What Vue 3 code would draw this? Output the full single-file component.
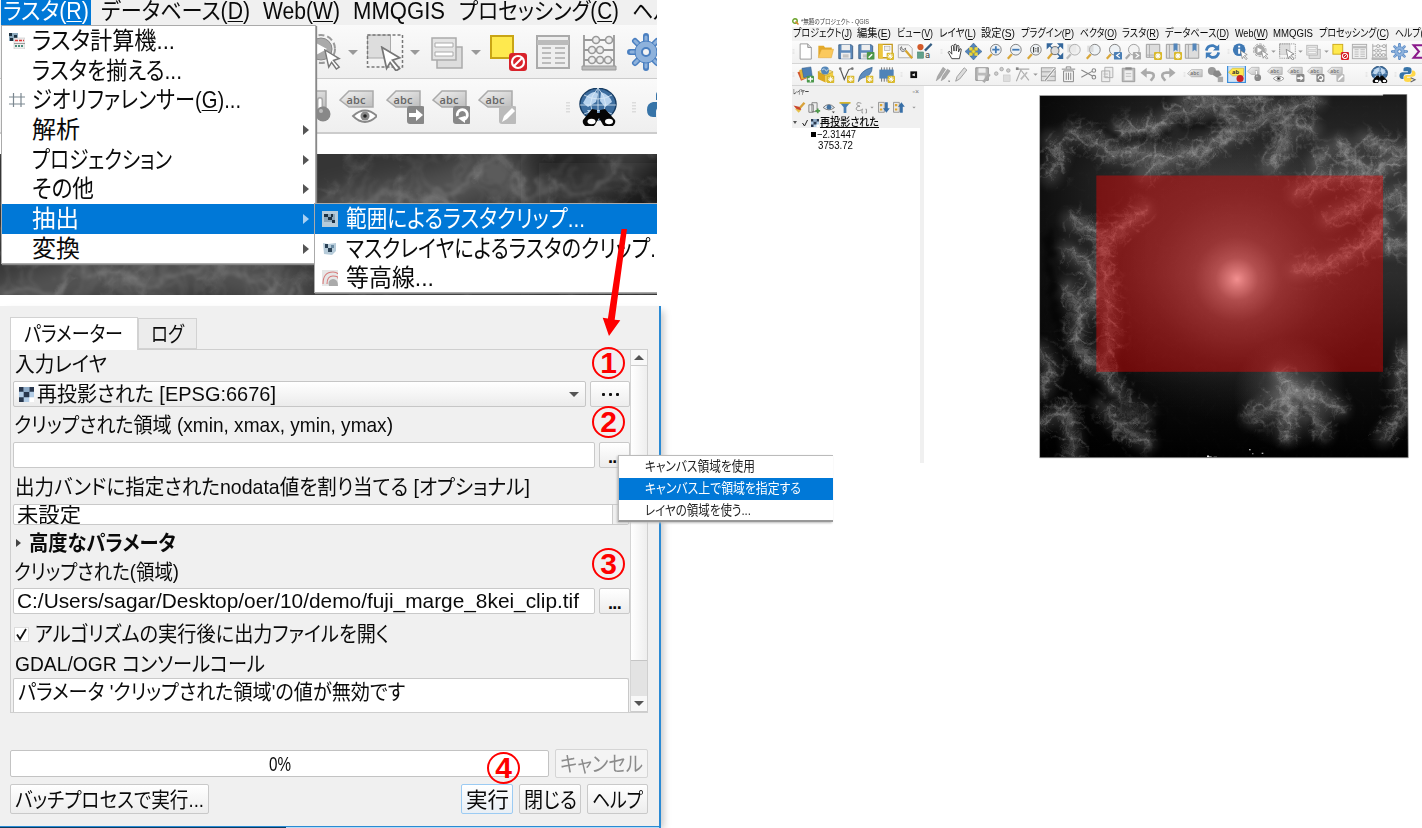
<script setup>
const vFit = {
  mounted(el, { value }) {
    const w = el.getBoundingClientRect().width
    if (!w) return
    el.style.transform = `scaleX(${value / w})`
    el.style.marginRight = `${value - w}px`
  },
}

/* [icon, centre] pairs become flex cells with the gap that precedes them */
const row = (start, cell, spec) => {
  let edge = start
  return spec.split(' ').map((s) => {
    const [name, pos] = s.split(':')
    const left = +pos - cell / 2
    const gap = left - edge
    edge = left + cell
    return { name, gap }
  })
}

const bigRow1 = row(0, 38, 'gearcur:325 drop:353 select:385 drop:415 stack:447 drop:476 yellow:508 table:553 abacus:599 gear:646')
const bigRow2 = row(0, 38, 'thermo:318 abceye:358 abcarrow:405 abcrot:451 abcpen:497 handle:568 globe:598 handle:634 python:665')

const smallRow1 = row(792, 19, 'handle:793 new:805 open:825 save:845 saveas:865 layout:885 manage:905 style:924 handle:941 hand:954 pan:973 zin:994 zout:1014 zone:1034 zfull:1054 zgray:1073 zlayer:1093 zlast:1113 znext:1132 mapnew:1153 bmnew:1173 bm:1192 refresh:1212 handle:1228 info:1240 gearcur:1261 drop:1273 select:1287 drop:1300 stack:1313 drop:1326 yellow:1340 table:1359 abacus:1379 gear:1399 sigma:1418')
const smallRow2 = row(792, 19, 'handle:793 layers:805 box:825 vnew:846 feather:865 chip:886 handle:901 flag:913 pens:942 pen:961 savegray:982 nodes:1002 vertex:1023 drop:1035 editrow:1048 trash:1068 cut:1088 copy:1107 paste:1128 undo:1148 redo:1167 handle:1184 abc:1195 shapes:1215 abcpin:1236 thermo:1255 abceye:1275 abcarrow:1295 abcrot:1315 abcpen:1335 handle:1366 globe:1379 handle:1395 python:1407')
const dockRow = row(792, 16, 'brush:799 addgrp:814 eye:829 funnel:845 eps:861 drop:872 expand:884 collapse:899 drop:914')

const bigMenu = [
  { pre: 'ラスタ(', key: 'R', post: ')', w: 86, gap: 3, on: true },
  { pre: 'データベース(', key: 'D', post: ')', w: 149, gap: 12 },
  { pre: 'Web(', key: 'W', post: ')', w: 77, gap: 13 },
  { pre: 'MMQGIS', key: '', post: '', w: 92, gap: 13 },
  { pre: 'プロセッシング(', key: 'C', post: ')', w: 160, gap: 14 },
  { pre: 'ヘルプ', key: '', post: '', w: 60, gap: 13 },
]
const smallMenu = [
  ['プロジェクト(', 'J', ')', 59, 1], ['編集(', 'E', ')', 34, 5], ['ビュー(', 'V', ')', 36, 6],
  ['レイヤ(', 'L', ')', 37, 6], ['設定(', 'S', ')', 34, 5], ['プラグイン(', 'P', ')', 53, 6],
  ['ベクタ(', 'O', ')', 37, 6], ['ラスタ(', 'R', ')', 37, 5], ['データベース(', 'D', ')', 64, 6],
  ['Web(', 'W', ')', 33, 6], ['MMQGIS', '', '', 40, 5], ['プロセッシング(', 'C', ')', 70, 6],
  ['ヘルプ(', 'H', ')', 38, 6],
]
const menuItems = [
  { t: 'ラスタ計算機...', w: 143, icon: 'calc' },
  { t: 'ラスタを揃える...', w: 150 },
  { t: 'ジオリファレンサー(', key: 'G', post: ')...', w: 209, icon: 'georef' },
  { t: '解析', w: 48, sub: true },
  { t: 'プロジェクション', w: 140, sub: true },
  { t: 'その他', w: 62, sub: true },
  { t: '抽出', w: 47, sub: true, on: true },
  { t: '変換', w: 48, sub: true },
]
const subItems = [
  { t: '範囲によるラスタクリップ...', w: 239, icon: 'clipext', on: true },
  { t: 'マスクレイヤによるラスタのクリップ...', w: 321, icon: 'clipmask' },
  { t: '等高線...', w: 88, icon: 'contour' },
]

/* relief: ridge lines with short spurs on both flanks */
let seed = 7
const rnd = () => {
  seed = (seed * 16807) % 2147483647
  return seed / 2147483647
}
const f = (n) => n.toFixed(1)
function relief(ridges, step) {
  let spurs = ''
  let main = ''
  for (const [L, ...p] of ridges) {
    main += 'M' + p.map((q) => q.join(' ')).join('L')
    for (let i = 0; i < p.length - 1; i++) {
      const [x1, y1] = p[i]
      const [x2, y2] = p[i + 1]
      const dist = Math.hypot(x2 - x1, y2 - y1)
      const a = Math.atan2(y2 - y1, x2 - x1)
      for (let t = 0; t < dist; t += step) {
        for (const s of [-1, 1]) {
          let x = x1 + ((x2 - x1) * t) / dist
          let y = y1 + ((y2 - y1) * t) / dist
          let b = a + s * (0.8 + rnd() * 0.7)
          const len = L * (0.3 + rnd() * 0.9)
          spurs += `M${f(x)} ${f(y)}`
          for (let n = 0; n < 4; n++) {
            b += (rnd() - 0.5) * 0.9
            x += (Math.cos(b) * len) / 4
            y += (Math.sin(b) * len) / 4
            spurs += `L${f(x)} ${f(y)}`
          }
        }
      }
    }
  }
  return { main, spurs }
}
const land = relief([
  [44, [340, 250], [400, 215], [450, 195], [520, 180], [590, 140], [660, 105], [740, 60], [860, 30]],
  [44, [755, 60], [772, 110], [765, 160], [720, 225]],
  [34, [772, 110], [845, 118]],
  [40, [120, 130], [200, 152], [235, 190], [340, 190], [400, 200]],
  [40, [270, 118], [380, 112], [430, 72], [490, 60], [560, 45], [620, 90]],
  [34, [1000, 150], [1080, 180], [1130, 185]],
  [34, [930, 160], [960, 210], [1020, 250], [1110, 205]],
  [30, [890, 180], [860, 220]],
  [34, [800, 310], [860, 275], [910, 262], [1000, 262]],
  [34, [1020, 262], [1010, 330], [960, 355], [890, 390]],
  [30, [800, 540], [900, 520], [1000, 470], [1060, 400]],
  [36, [1060, 330], [1110, 310], [1130, 370]],
  [36, [1060, 470], [1130, 465]],
  [40, [340, 360], [280, 410], [230, 450], [215, 520], [230, 630], [240, 740], [215, 820]],
  [42, [120, 390], [180, 420], [230, 450]],
  [44, [110, 480], [180, 530], [200, 600], [190, 650]],
  [48, [115, 590], [150, 680], [130, 760], [190, 830]],
  [34, [220, 830], [250, 890], [280, 950], [350, 980]],
  [44, [30, 1000], [110, 960], [125, 1040], [130, 1100]],
  [40, [220, 940], [270, 1010], [350, 1060]],
  [30, [30, 780], [60, 840], [40, 900]],
  [32, [60, 150], [90, 190], [60, 260]],
  [34, [750, 850], [780, 905], [720, 940], [660, 985]],
  [34, [780, 905], [780, 960], [770, 1040]],
  [34, [780, 905], [840, 960], [880, 1030]],
  [30, [790, 900], [860, 920], [930, 960]],
  [36, [1130, 780], [1110, 870], [1125, 960], [1060, 1040]],
  [34, [460, 25], [560, 30], [700, 25]],
], 8)
const strip = relief([
  [50, [0, 150], [90, 120], [150, 128], [200, 110], [290, 135]],
  [50, [330, 60], [400, 45], [450, 35], [500, 12]],
  [36, [520, 40], [590, 35], [630, 10]],
], 9)
</script>

<template>
  <div class="page">
    <svg class="defs" aria-hidden="true">
      <defs>
        <linearGradient id="gl" x1="0" y1="0" x2="1" y2="1"><stop offset="0" stop-color="#f4f4f4" /><stop offset="1" stop-color="#bdbdbd" /></linearGradient>
        <radialGradient id="fuji"><stop offset="0" stop-color="#fff" stop-opacity=".95" /><stop offset=".06" stop-color="#fff" stop-opacity=".72" /><stop offset=".15" stop-color="#fff" stop-opacity=".42" /><stop offset=".3" stop-color="#eee" stop-opacity=".22" /><stop offset=".6" stop-color="#ccc" stop-opacity=".09" /><stop offset="1" stop-color="#999" stop-opacity="0" /></radialGradient>
        <radialGradient id="soft"><stop offset="0" stop-color="#aaa" stop-opacity=".5" /><stop offset="1" stop-color="#999" stop-opacity="0" /></radialGradient>
        <linearGradient id="ground" x1="0" y1="0" x2="0" y2="1"><stop offset="0" stop-color="#1a1a1a" /><stop offset=".22" stop-color="#303030" /><stop offset=".5" stop-color="#2c2c2c" /><stop offset=".8" stop-color="#0c0c0c" /><stop offset="1" stop-color="#000" /></linearGradient>
        <linearGradient id="west" x1="0" y1="0" x2="1" y2="0"><stop offset="0" stop-color="#000" stop-opacity=".7" /><stop offset=".3" stop-color="#000" stop-opacity="0" /></linearGradient>
        <filter id="b1"><feTurbulence type="fractalNoise" baseFrequency=".03" numOctaves="3" seed="4" result="n" /><feDisplacementMap in="SourceGraphic" in2="n" scale="50" xChannelSelector="R" yChannelSelector="G" /><feGaussianBlur stdDeviation="1.6" /></filter>
        <filter id="b2" x="-20%" y="-20%" width="140%" height="140%"><feGaussianBlur stdDeviation="14" /></filter>
        <filter id="b3" x="-20%" y="-20%" width="140%" height="140%"><feTurbulence type="fractalNoise" baseFrequency=".03" numOctaves="3" seed="4" result="n" /><feDisplacementMap in="SourceGraphic" in2="n" scale="50" xChannelSelector="R" yChannelSelector="G" /><feGaussianBlur stdDeviation="6" /></filter>
        <filter id="tex" x="0" y="0" width="100%" height="100%" color-interpolation-filters="sRGB"><feTurbulence type="turbulence" baseFrequency=".02" numOctaves="5" seed="11" /><feColorMatrix values="0 0 0 0 1  0 0 0 0 1  0 0 0 0 1  -3.4 0 0 0 .95" /></filter>
        <mask id="mr" maskUnits="userSpaceOnUse" x="0" y="0" width="1160" height="1120"><g filter="url(#b2)"><rect x="-100" y="-100" width="1400" height="1400" fill="#111" /><path :d="land.main" fill="none" stroke="#fff" stroke-width="70" /></g></mask>
      </defs>
      <symbol id="cursor" viewBox="0 0 20 22"><path d="M1 1l15 9-6 2 6 7-3 2-5-7-3 5z" fill="#fff" stroke="#777" stroke-width="1.5" /></symbol>
      <symbol id="tag" viewBox="0 0 38 38"><path d="M1 12l9-9h24v16H10z" fill="url(#gl)" stroke="#aaa" stroke-width="1.5" /><text x="7.500" y="16" font-size="11" font-weight="600" font-family="Open Sans, sans-serif" fill="#666" textLength="19">abc</text></symbol>
      <symbol id="plus" viewBox="0 0 14 14"><rect width="14" height="14" rx="2" fill="#d9b92b" /><path d="M7 2v10M2 7h10M3.500 3.500l7 7M10.500 3.500l-7 7" stroke="#fff" stroke-width="1.800" /></symbol>
      <symbol id="lens" viewBox="0 0 38 38"><path d="M4 35l9-10" stroke="#d9a73a" stroke-width="5" /><circle cx="22" cy="15" r="12" fill="#eef2f5" stroke="#777" stroke-width="2" /></symbol>

      <symbol id="i-handle" viewBox="0 0 38 38"><path d="M18 14v11M20 14v11" stroke="#ccc" stroke-dasharray="1.500 1.500" stroke-width="1.200" /></symbol>
      <symbol id="i-drop" viewBox="0 0 38 38"><path d="M14 17h10l-5 5z" fill="#999" /></symbol>
      <symbol id="i-gearcur" viewBox="0 0 38 38"><circle cx="15" cy="16" r="14" fill="#f4f4f4" stroke="#999" stroke-width="2" stroke-dasharray="6 3" /><circle cx="15" cy="16" r="11" fill="#aaa" stroke="#888" /><path d="M10 10l11 6-11 6z" fill="#fff" /><use href="#cursor" x="18" y="16" width="19" height="21" /></symbol>
      <symbol id="i-select" viewBox="0 0 38 38"><rect x="1.500" y="2" width="23" height="23" fill="#ddd" stroke="#aaa" /><rect x="1.500" y="2" width="35" height="32" fill="none" stroke="#777" stroke-width="1.500" stroke-dasharray="3 2" /><use href="#cursor" x="14" y="13" width="25" height="26" /></symbol>
      <symbol id="i-stack" viewBox="0 0 38 38"><rect x="9" y="14" width="25" height="21" fill="#ddd" stroke="#aaa" stroke-width="1.500" /><rect x="4" y="5" width="24" height="22" fill="#e4e4e4" stroke="#aaa" stroke-width="1.500" /><path d="M7 10h18v4H7zM7 19h18v4H7z" fill="#fff" stroke="#aaa" /></symbol>
      <symbol id="i-yellow" viewBox="0 0 38 38"><rect x="2" y="3" width="22" height="22" fill="#fee94e" stroke="#c9a515" stroke-width="2" /><rect x="20" y="20" width="18" height="18" rx="3" fill="#d8222a" /><circle cx="29" cy="29" r="6" fill="none" stroke="#fff" stroke-width="2.200" /><path d="M25 33l8-8" stroke="#fff" stroke-width="2.200" /></symbol>
      <symbol id="i-table" viewBox="0 0 38 38"><rect x="3" y="3" width="32" height="32" fill="#eee" stroke="#aaa" stroke-width="2" /><path d="M3 7h32v5H3z" fill="#bbb" /><path d="M8 15h9M21 15h10M8 20h9M21 20h10M8 25h9M21 25h10M8 30h9M21 30h10" stroke="#aaa" stroke-width="1.600" /></symbol>
      <symbol id="i-abacus" viewBox="0 0 38 38"><path d="M4 2v31M34 2v31M4 7h30M4 17h30M4 27h30" stroke="#999" stroke-width="1.800" fill="none" /><path d="M2 33h34v4H2z" fill="#bbb" stroke="#999" /><g fill="#eee" stroke="#999" stroke-width="1.600"><circle cx="16" cy="7" r="3.500" /><circle cx="29" cy="7" r="3.500" /><circle cx="12" cy="17" r="3.500" /><circle cx="20" cy="17" r="3.500" /><circle cx="12" cy="27" r="3.500" /><circle cx="20" cy="27" r="3.500" /><circle cx="28" cy="27" r="3.500" /></g></symbol>
      <symbol id="i-gear" viewBox="0 0 38 38"><path d="M19 3v32M3 19h32M8 8l22 22M30 8L8 30" stroke="#4a7fc0" stroke-width="6" stroke-linecap="round" /><path d="M19 4v30M4 19h30M8 8l22 22M30 8L8 30" stroke="#8eb2dc" stroke-width="3" stroke-linecap="round" /><circle cx="19" cy="19" r="11" fill="#8eb2dc" stroke="#4a7fc0" stroke-width="1" /><circle cx="19" cy="19" r="4" fill="#f4f4f4" stroke="#4a7fc0" stroke-width="2" /></symbol>
      <symbol id="i-sigma" viewBox="0 0 38 38"><path d="M33 10V5H8l12 14L8 33h25v-5" fill="none" stroke="#8b1a8b" stroke-width="4.500" /></symbol>
      <symbol id="i-thermo" viewBox="0 0 38 38"><path d="M1 12l9-9h17v16H10z" fill="url(#gl)" stroke="#aaa" stroke-width="1.500" /><path d="M21 12v16" stroke="#aaa" stroke-width="6" stroke-linecap="round" /><path d="M21 12v14" stroke="#fff" stroke-width="3" stroke-linecap="round" /><circle cx="24" cy="26" r="7.500" fill="#888" /><circle cx="22" cy="23" r="2" fill="#bbb" /></symbol>
      <symbol id="i-abc" viewBox="0 0 38 38"><use href="#tag" y="5" width="38" height="38" /></symbol>
      <symbol id="i-abceye" viewBox="0 0 38 38"><use href="#tag" width="38" height="38" /><path d="M14 28q12-11 24 0q-12 12-24 0z" fill="#fff" stroke="#888" stroke-width="1.800" /><circle cx="26" cy="28" r="4.500" fill="#888" /><circle cx="26" cy="28" r="1.800" fill="#222" /></symbol>
      <symbol id="i-abcarrow" viewBox="0 0 38 38"><use href="#tag" width="38" height="38" /><rect x="21" y="18" width="18" height="18" rx="3" fill="#888" /><path d="M23 25h7v-4l7 6-7 6v-4h-7z" fill="#fff" /></symbol>
      <symbol id="i-abcrot" viewBox="0 0 38 38"><use href="#tag" width="38" height="38" /><rect x="21" y="18" width="18" height="18" rx="3" fill="#888" /><path d="M25.500 28a5 5 0 1 1 6 3.500" fill="none" stroke="#fff" stroke-width="2.800" /><path d="M26 30l7-2v7z" fill="#fff" /></symbol>
      <symbol id="i-abcpen" viewBox="0 0 38 38"><use href="#tag" width="38" height="38" /><rect x="21" y="18" width="18" height="18" rx="3" fill="#bbb" /><path d="M24 34l2-6 8-8 3 3-8 8z" fill="#fff" /></symbol>
      <symbol id="i-abcpin" viewBox="0 0 38 38"><rect x="-1" y="-1" width="40" height="38" fill="#d4e4f4" stroke="#3b8edb" stroke-width="3" /><path d="M1 14l9-9h25v17H10z" fill="#ffe94e" stroke="#b49a1c" /><text x="9" y="18" font-size="13" font-weight="bold" font-family="Open Sans, sans-serif" fill="#333">ab</text><circle cx="27" cy="28" r="8" fill="#c22" /></symbol>
      <symbol id="i-globe" viewBox="0 0 38 38"><circle cx="19" cy="16" r="18" fill="#3d6d9e" stroke="#173d64" stroke-width="1.500" transform="translate(0 2) scale(1 .88)" /><path d="M8 8q8-7 11-2l-2 8-8 5-5-4zM22 4q9 3 11 10l-7 5-5-6zM8 22h8l2 7-6-1z" fill="#b8d3ee" /><path d="M1 17h36M19 0v32M5 7q14 8 28 0M5 26q14-7 28 0M19 0Q4 16 19 32Q34 16 19 0" fill="none" stroke="#dcebf8" stroke-width=".800" /><path d="M13 21l5 1v3h3v-3l5-1 10 11a6 5 0 0 1-13 3l-3-5-3 5a6 5 0 0 1-13-3z" fill="#050505" /><ellipse cx="12.500" cy="33.500" rx="4" ry="2.800" fill="#fff" /><ellipse cx="30" cy="33.500" rx="4" ry="2.800" fill="#fff" /></symbol>
      <symbol id="i-python" viewBox="0 0 38 38"><path d="M18 2q-8 0-8 5v5h10v2H7q-6 1-6 8 0 7 6 7h3v-6q1-5 6-5h8q4-1 4-5V7q-1-5-10-5z" fill="#3774a8" /><path d="M20 36q8 0 8-5v-5H18v-2h13q6-1 6-7 0-6-6-7h-2v5q-1 5-5 5h-8q-5 1-5 5v6q1 5 9 5z" fill="#ffd748" /><path d="M26 26l10 5-10 5" fill="none" stroke="#666" stroke-width="2.500" /></symbol>

      <symbol id="i-new" viewBox="0 0 38 38"><path d="M7 2h17l8 8v26H7z" fill="#fff" stroke="#888" stroke-width="1.800" /><path d="M24 2v8h8" fill="#ddd" stroke="#888" stroke-width="1.800" /></symbol>
      <symbol id="i-open" viewBox="0 0 38 38"><path d="M3 33V6h12l3 4h15v6H10z" fill="#e3a92b" /><path d="M3 33l7-19h27l-5 19z" fill="#fbc95c" stroke="#d99a22" /></symbol>
      <symbol id="i-save" viewBox="0 0 38 38"><path d="M4 4h28l3 3v28H4z" fill="#5d89ba" stroke="#3e5f85" stroke-width="2" /><path d="M10 4h19v12H10zM9 22h21v13H9z" fill="#eee" /><path d="M13 27h13M13 31h13" stroke="#888" stroke-width="1.500" /></symbol>
      <symbol id="i-saveas" viewBox="0 0 38 38"><use href="#i-save" width="38" height="38" /><rect x="22" y="20" width="17" height="17" rx="2" fill="#4d9648" /><path d="M26 33l8-8" stroke="#fff" stroke-width="3.500" /></symbol>
      <symbol id="i-layout" viewBox="0 0 38 38"><path d="M4 3h30v30H4z" fill="#fff" stroke="#c39920" stroke-width="3" /><path d="M4 3h9v32H4z" fill="#edc53d" /><rect x="17" y="7" width="12" height="10" fill="#eee" stroke="#888" /><use href="#plus" x="21" y="21" width="17" height="17" /></symbol>
      <symbol id="i-manage" viewBox="0 0 38 38"><path d="M3 4h23l8 8v21H3z" fill="#f5f5f5" stroke="#aaa" stroke-width="2" /><path d="M19 17l15 17" stroke="#d6a52c" stroke-width="5" /><path d="M10 8a6 6 0 1 0 9 3l-4 4-4-2z" fill="#ddd" stroke="#666" stroke-width="1.800" /></symbol>
      <symbol id="i-style" viewBox="0 0 38 38"><circle cx="10" cy="9" r="7" fill="#d35a2a" /><rect x="3" y="20" width="14" height="14" fill="#62a08a" stroke="#3b7963" /><path d="M20 17L35 2" stroke="#335c82" stroke-width="5" /><text x="20" y="34" font-size="21" font-family="Roboto, sans-serif" fill="#444">a</text></symbol>
      <symbol id="i-hand" viewBox="0 0 38 38"><path d="M13 35L5 21q1-5 5 0l3 4-1-18q3-4 5 1l1 10V4q4-4 5 1v13l2-12q4-2 4 2l-1 12 3-7q4-1 3 3l-4 19z" fill="#fff" stroke="#333" stroke-width="2" /></symbol>
      <symbol id="i-pan" viewBox="0 0 38 38"><path d="M19 0l8 9h-5v6h-6V9h-5zM19 38l8-9h-5v-6h-6v6h-5zM0 19l9-8v5h6v6H9v5zM38 19l-9-8v5h-6v6h6v5z" fill="#5386bd" stroke="#30537d" /><path d="M10 10h7v7h-7zM21 10h7v7h-7zM10 21h7v7h-7zM21 21h7v7h-7zM15 15h8v8h-8z" fill="#ead93f" stroke="#b39f23" stroke-width=".800" /></symbol>
      <symbol id="i-zin" viewBox="0 0 38 38"><use href="#lens" width="38" height="38" /><path d="M22 7v16M14 15h16" stroke="#4179b5" stroke-width="4" /></symbol>
      <symbol id="i-zout" viewBox="0 0 38 38"><use href="#lens" width="38" height="38" /><path d="M14 15h16" stroke="#4179b5" stroke-width="4" /></symbol>
      <symbol id="i-zone" viewBox="0 0 38 38"><use href="#lens" width="38" height="38" /><path d="M17 9v12M27 9v12M22 12v2M22 17v2" stroke="#333" stroke-width="2.500" /></symbol>
      <symbol id="i-zfull" viewBox="0 0 38 38"><path d="M4 35l11-13" stroke="#d9a73a" stroke-width="5" /><circle cx="20" cy="17" r="9" fill="#ddd" stroke="#666" stroke-width="2" /><path d="M3 2h9L3 11zM37 2h-9l9 9zM37 34h-9l9-9zM9 7l5 5M31 7l-5 5M31 29l-5-5" fill="#34679c" stroke="#34679c" stroke-width="3" /></symbol>
      <symbol id="i-zgray" viewBox="0 0 38 38"><path d="M4 35l9-10" stroke="#bbb" stroke-width="5" /><rect x="5" y="3" width="20" height="18" fill="#ddd" /><circle cx="22" cy="15" r="12" fill="#eee" fill-opacity=".7" stroke="#aaa" stroke-width="2" /></symbol>
      <symbol id="i-zlayer" viewBox="0 0 38 38"><use href="#lens" width="38" height="38" /><path d="M5 6h14v14H5z" fill="#ccc" opacity=".6" /></symbol>
      <symbol id="i-zlast" viewBox="0 0 38 38"><use href="#lens" width="38" height="38" /><rect x="20" y="20" width="18" height="17" rx="2" fill="#4b7fb5" /><path d="M33 23l-7 5 7 5" stroke="#fff" stroke-width="2.500" fill="none" /></symbol>
      <symbol id="i-znext" viewBox="0 0 38 38"><path d="M4 35l9-10" stroke="#aaa" stroke-width="5" /><circle cx="22" cy="15" r="12" fill="#f3f3f3" stroke="#999" stroke-width="2" /><rect x="20" y="20" width="18" height="17" rx="2" fill="#aaa" /><path d="M26 23l7 5-7 5" stroke="#fff" stroke-width="2.500" fill="none" /></symbol>
      <symbol id="i-mapnew" viewBox="0 0 38 38"><path d="M3 3h30v29H3z" fill="#ddd" stroke="#999" stroke-width="2" /><path d="M10 3v29M3 27h30" stroke="#aaa" stroke-width="2" /><use href="#plus" x="20" y="20" width="18" height="18" /></symbol>
      <symbol id="i-bm" viewBox="0 0 38 38"><path d="M3 3h30v31H3z" fill="#ddd" stroke="#999" stroke-width="2" /><path d="M10 3v31" stroke="#aaa" stroke-width="2" /><path d="M19 1h9v18l-4-4-5 4z" fill="#5486ba" /></symbol>
      <symbol id="i-bmnew" viewBox="0 0 38 38"><use href="#i-bm" width="38" height="38" /><use href="#plus" x="20" y="20" width="18" height="18" /></symbol>
      <symbol id="i-refresh" viewBox="0 0 38 38"><path d="M5 17Q8 4 21 6l7 4" fill="none" stroke="#3f7cba" stroke-width="6" /><path d="M34 3v14H20zM4 35V21h14z" fill="#3f7cba" /><path d="M33 21Q30 34 17 32l-7-4" fill="none" stroke="#3f7cba" stroke-width="6" /></symbol>
      <symbol id="i-info" viewBox="0 0 38 38"><circle cx="16" cy="15" r="14" fill="#3f79b5" /><path d="M16 13v11M16 6v4" stroke="#fff" stroke-width="4.500" /><use href="#cursor" x="18" y="16" width="20" height="22" /></symbol>
      <symbol id="i-layers" viewBox="0 0 38 38"><path d="M1 14l14-5 8 18-14 6z" fill="#d1582e" /><path d="M5 9l16-4 5 20-16 5z" fill="#e3b434" /><path d="M11 5l20-3 3 20-19 4z" fill="#4c7fb4" stroke="#2d527c" /><rect x="22" y="22" width="16" height="15" rx="2" fill="#4b984a" /><path d="M30 24v11M24 29h12" stroke="#fff" stroke-width="3" /></symbol>
      <symbol id="i-box" viewBox="0 0 38 38"><path d="M2 13l17 7v17L2 29z" fill="#dba721" /><path d="M36 13l-17 7v17l17-8z" fill="#f1ce45" /><path d="M2 13l17-8 17 8-17 8z" fill="#fae27d" stroke="#9d7a16" /><circle cx="18" cy="10" r="9" fill="#5386b8" /><path d="M11 9q6-6 8 0t7-3" stroke="#cfe0f0" stroke-width="2" fill="none" /><use href="#plus" x="22" y="21" width="17" height="17" /></symbol>
      <symbol id="i-vnew" viewBox="0 0 38 38"><path d="M5 6l9 24L24 8l8-3" fill="none" stroke="#555" stroke-width="2.500" /><circle cx="5" cy="6" r="3" fill="#777" /><circle cx="32" cy="6" r="3" fill="#777" /><use href="#plus" x="20" y="21" width="17" height="17" /></symbol>
      <symbol id="i-feather" viewBox="0 0 38 38"><path d="M3 35Q5 10 34 3q0 19-22 24-6 2-9 8z" fill="#5d8dbf" stroke="#315d8c" stroke-width="1.500" /><use href="#plus" x="20" y="21" width="17" height="17" /></symbol>
      <symbol id="i-chip" viewBox="0 0 38 38"><path d="M8 3v32M14 3v32M20 3v32M26 3v32M32 3v32" stroke="#666" stroke-width="2" /><rect x="3" y="8" width="32" height="20" fill="#4f83b8" /><use href="#plus" x="21" y="21" width="17" height="17" /></symbol>
      <symbol id="i-flag" viewBox="0 0 38 38"><rect x="12" y="12" width="15" height="15" fill="#111" /><path d="M15 20l7-4v7z" fill="#fff" /></symbol>
      <symbol id="i-pens" viewBox="0 0 38 38"><path d="M5 33l3-10L20 3l6 4-13 20zM16 33l3-10L30 7l6 4-12 17z" fill="#aaa" stroke="#888" /><path d="M31 33h5l-2 3z" fill="#555" /></symbol>
      <symbol id="i-pen" viewBox="0 0 38 38"><path d="M6 34l3-10L25 4l6 5-16 20z" fill="#ddd" stroke="#999" stroke-width="2" /></symbol>
      <symbol id="i-savegray" viewBox="0 0 38 38"><path d="M4 4h28v28H4z" fill="#bbb" stroke="#888" stroke-width="2" /><path d="M10 5h16v10H10zM9 21h15v11H9z" fill="#eee" /><path d="M21 36l14-18" stroke="#aaa" stroke-width="6" /></symbol>
      <symbol id="i-nodes" viewBox="0 0 38 38"><g fill="#ccc" stroke="#999" stroke-width="1.500"><circle cx="5" cy="17" r="4" /><circle cx="17" cy="7" r="4" /><circle cx="32" cy="10" r="4" /></g><rect x="21" y="20" width="15" height="15" fill="#ddd" stroke="#bbb" /></symbol>
      <symbol id="i-vertex" viewBox="0 0 38 38"><path d="M3 34L14 7h18M5 7h8M14 10l17 22" fill="none" stroke="#aaa" stroke-width="2.500" /><path d="M13 30l14-16" stroke="#bbb" stroke-width="4" /><rect x="2" y="3" width="6" height="6" fill="#888" /></symbol>
      <symbol id="i-editrow" viewBox="0 0 38 38"><rect x="3" y="4" width="31" height="29" fill="#ddd" stroke="#999" stroke-width="2" /><path d="M3 13h31M3 23h31" stroke="#999" stroke-width="2" /><path d="M11 33L33 6" stroke="#fff" stroke-width="6" /><path d="M11 33L33 6" stroke="#999" stroke-width="3" /></symbol>
      <symbol id="i-trash" viewBox="0 0 38 38"><path d="M8 11h22v24H8zM4 7h30M14 6V2h10v4M14 15v16M19 15v16M24 15v16" fill="none" stroke="#888" stroke-width="2.200" /></symbol>
      <symbol id="i-cut" viewBox="0 0 38 38"><path d="M3 9l24 13M3 25l24-13" stroke="#888" stroke-width="2.500" /><circle cx="31" cy="10" r="4" fill="none" stroke="#888" stroke-width="2.500" /><circle cx="31" cy="25" r="4" fill="none" stroke="#888" stroke-width="2.500" /></symbol>
      <symbol id="i-copy" viewBox="0 0 38 38"><path d="M13 3h18v23H13zM6 11h18v24H6z" fill="#eee" stroke="#aaa" stroke-width="2" /><path d="M10 18h10M10 24h10" stroke="#bbb" stroke-width="2" /></symbol>
      <symbol id="i-paste" viewBox="0 0 38 38"><path d="M5 5h28v30H5z" fill="#bbb" stroke="#999" stroke-width="2" /><path d="M10 10h18v22H10z" fill="#eee" /><path d="M12 3h14v5H12z" fill="#888" /><path d="M13 17h12M13 23h12" stroke="#bbb" stroke-width="2" /></symbol>
      <symbol id="i-undo" viewBox="0 0 38 38"><path d="M11 15h12q10 1 7 10l-6 8" fill="none" stroke="#aaa" stroke-width="6" /><path d="M1 15L15 4v22z" fill="#aaa" /></symbol>
      <symbol id="i-redo" viewBox="0 0 38 38"><path d="M27 15H15q-10 1-7 10l6 8" fill="none" stroke="#aaa" stroke-width="6" /><path d="M37 15L23 4v22z" fill="#aaa" /></symbol>
      <symbol id="i-shapes" viewBox="0 0 38 38"><circle cx="11" cy="11" r="9" fill="#999" /><path d="M16 10h11l6 10-10 6-10-6z" fill="#888" /><rect x="24" y="24" width="12" height="12" fill="#aaa" /></symbol>
      <symbol id="i-brush" viewBox="0 0 38 38"><path d="M20 22L35 5" stroke="#d8a13a" stroke-width="7" /><path d="M3 13l14 17 9-6-7-7z" fill="#ca452b" /><path d="M6 22l12 12 7-7z" fill="#e6c14b" /></symbol>
      <symbol id="i-addgrp" viewBox="0 0 38 38"><path d="M4 11h13v22H4zM13 5h15v26H13z" fill="#eee" stroke="#777" stroke-width="2.500" /><path d="M30 22v14M23 29h14" stroke="#4e9a4a" stroke-width="5" /></symbol>
      <symbol id="i-eye" viewBox="0 0 38 38"><path d="M2 19q16-17 33 0q-16 14-33 0z" fill="#dce8f2" stroke="#666" stroke-width="2.500" /><circle cx="19" cy="18" r="7" fill="#41709e" /><path d="M27 31h9l-4 5z" fill="#444" /></symbol>
      <symbol id="i-funnel" viewBox="0 0 38 38"><path d="M3 4h32L23 18v17h-8V18z" fill="#4980b5" /><path d="M3 3h32v5H3z" fill="#d8b72d" /></symbol>
      <symbol id="i-eps" viewBox="0 0 38 38"><path d="M20 7Q6 1 7 10q1 5 9 5Q4 16 5 24q3 7 16 2M25 24h-3v11h3M32 24h3v11h-3" fill="none" stroke="#888" stroke-width="2.500" /></symbol>
      <symbol id="i-expand" viewBox="0 0 38 38"><path d="M3 4h17v29H3z" fill="#e9e9e9" stroke="#777" stroke-width="2" /><path d="M7 9h7v6H7zM7 22h7v6H7z" fill="#e0a72f" /><path d="M22 4h8v17h6L26 34 16 21h6z" fill="#386fa7" /></symbol>
      <symbol id="i-collapse" viewBox="0 0 38 38"><path d="M3 4h17v29H3z" fill="#e9e9e9" stroke="#777" stroke-width="2" /><path d="M7 9h7v6H7zM7 22h7v6H7z" fill="#e0a72f" /><path d="M22 34h8V17h6L26 4 16 17h6z" fill="#386fa7" /></symbol>

      <symbol id="i-raster" viewBox="0 0 16 16"><rect width="16" height="16" fill="#b3cde6" /><path d="M0 0h5v5H0zM11 0h5v5h-5zM5 5h6v6H5zM0 11h5v5H0z" fill="#27364c" /><path d="M11 11h5v5h-5z" fill="#fff" /><path d="M5 0h6v5H5z" fill="#8eabc8" /></symbol>
      <symbol id="i-calc" viewBox="0 0 16 16"><path d="M0 0h9v8H0z" fill="#8ca9bd" /><path d="M0 0h3v3H0zM5 2h3v3H5zM1 5h3v3H1z" fill="#1d3140" /><path d="M5 5h11v11H5z" fill="#eee" stroke="#bbb" stroke-width=".500" /><path d="M6 7.500h9" stroke="#d33" stroke-width="1.600" stroke-dasharray="3 1" /><path d="M6 13h9" stroke="#4b8c7a" stroke-width="1.800" stroke-dasharray="2 1" /><path d="M5 10.500h11" stroke="#888" stroke-width=".800" /></symbol>
      <symbol id="i-georef" viewBox="0 0 16 16"><path d="M4.500 1v14M12 1v14M0 5h16M0 12h16" stroke="#7b8790" stroke-width="1.200" /></symbol>
      <symbol id="i-clipext" viewBox="0 0 16 16"><rect width="16" height="16" fill="#b6cbd9" /><path d="M2 3h11v8H2z" fill="#8ba6b9" /><path d="M2 3h4v3H2zM6 6h4v3H6zM10 9h3v3h-3zM9 3h2v3H9z" fill="#1e3142" /></symbol>
      <symbol id="i-clipmask" viewBox="0 0 16 16"><path d="M1 2l5 1 8-1v8l-4 4-8-1z" fill="#b6cbd9" /><path d="M3 3h3v4H3zM6 7h4v4H6z" fill="#2b4256" /><path d="M9 4h3v3H9z" fill="#6b8ba3" /></symbol>
      <symbol id="i-contour" viewBox="0 0 16 16"><rect width="16" height="16" fill="#e6e6e6" /><path d="M7 16q-2-6 4-7 5 0 5 7z" fill="#aaa" /><path d="M1 14Q1 2 11 2q4 0 5 2M5 14q0-8 6-8t5 3" fill="none" stroke="#d87b7b" stroke-width="1.100" /></symbol>
    </svg>

    <div class="left">
      <section class="shot">
        <div class="menubar">
          <span v-for="m in bigMenu" :key="m.pre" class="mb" :class="{ on: m.on }" :style="{ marginLeft: m.gap + 'px' }"><span v-fit="m.w" class="fit">{{ m.pre }}<u v-if="m.key">{{ m.key }}</u>{{ m.post }}</span></span>
        </div>
        <div class="tb tb1"><svg v-for="(i, k) in bigRow1" :key="k" class="ic38" :style="{ marginLeft: i.gap + 'px' }"><use :href="'#i-' + i.name" /></svg></div>
        <div class="tb tb2"><svg v-for="(i, k) in bigRow2" :key="k" class="ic38" :style="{ marginLeft: i.gap + 'px' }"><use :href="'#i-' + i.name" /></svg></div>
        <div class="gap"></div>
        <svg class="strip" viewBox="0 0 657 141">
          <rect width="657" height="141" fill="#353535" />
          <rect x="530" width="180" height="141" fill="#141414" filter="url(#b2)" />
          <rect width="657" height="141" filter="url(#tex)" opacity=".13" />
          <g fill="none" stroke="#fff" stroke-linecap="round">
            <path :d="strip.main" stroke-width="40" opacity=".16" filter="url(#b2)" />
            <g filter="url(#b1)"><path :d="strip.main" stroke-width="7" opacity=".09" /><path :d="strip.spurs" stroke-width="4" opacity=".055" /></g>
          </g>
        </svg>
        <div class="menu">
          <div v-for="m in menuItems" :key="m.t" class="mi" :class="{ on: m.on }">
            <svg class="ic16"><use v-if="m.icon" :href="'#i-' + m.icon" /></svg>
            <span v-fit="m.w" class="fit">{{ m.t }}<u v-if="m.key">{{ m.key }}</u>{{ m.post }}</span>
            <i v-if="m.sub" class="tri"></i>
          </div>
        </div>
        <div class="menu sub">
          <div v-for="m in subItems" :key="m.t" class="mi" :class="{ on: m.on }">
            <svg class="ic16"><use :href="'#i-' + m.icon" /></svg>
            <span v-fit="m.w" class="fit">{{ m.t }}</span>
          </div>
        </div>
      </section>

      <section class="dialog">
        <div class="tabs">
          <div class="tab act"><span v-fit="99" class="fit">パラメーター</span></div>
          <div class="tab"><span v-fit="33" class="fit">ログ</span></div>
        </div>
        <div class="panel">
          <div class="form">
            <div class="lab l1"><span v-fit="92" class="fit">入力レイヤ</span></div>
            <div class="line">
              <div class="combo"><svg class="ic15"><use href="#i-raster" /></svg><span v-fit="239" class="fit">再投影された [EPSG:6676]</span><i class="down"></i></div>
              <div class="btn dots wide"><b></b><b></b><b></b></div>
            </div>
            <div class="lab l2"><span v-fit="379" class="fit">クリップされた領域 (xmin, xmax, ymin, ymax)</span></div>
            <div class="line"><div class="inp"></div><div class="btn sm"><span>...</span></div></div>
            <div class="lab l3"><span v-fit="515" class="fit">出力バンドに指定されたnodata値を割り当てる [オプショナル]</span></div>
            <div class="inp spin"><span v-fit="64" class="fit">未設定</span><i class="sp"></i></div>
            <div class="lab l4"><i class="rt"></i><span v-fit="147" class="fit">高度なパラメータ</span></div>
            <div class="lab l5"><span v-fit="165" class="fit">クリップされた(領域)</span></div>
            <div class="line"><div class="inp"><span v-fit="562" class="fit">C:/Users/sagar/Desktop/oer/10/demo/fuji_marge_8kei_clip.tif</span></div><div class="btn sm"><span>...</span></div></div>
            <div class="lab l6"><svg class="chk" viewBox="0 0 15 15"><rect x=".5" y=".5" width="14" height="14" fill="#fff" stroke="#ddd" /><path d="M3 7.500l3 4.500 6-10" fill="none" stroke="#111" stroke-width="1.800" /></svg><span v-fit="354" class="fit">アルゴリズムの実行後に出力ファイルを開く</span></div>
            <div class="lab l7"><span v-fit="250" class="fit">GDAL/OGR コンソールコール</span></div>
            <div class="inp log"><span v-fit="387" class="fit">パラメータ 'クリップされた領域'の値が無効です</span></div>
          </div>
          <div class="scroll"><div class="sb"><i class="up"></i></div><div class="thumb"></div><div class="track"></div><div class="sb"><i class="down"></i></div></div>
        </div>
        <div class="prow"><div class="prog"><span v-fit="22" class="fit">0%</span></div><div class="btn off"><span v-fit="83" class="fit">キャンセル</span></div></div>
        <div class="brow">
          <div class="btn b1"><span v-fit="189" class="fit">バッチプロセスで実行...</span></div>
          <div class="btn b2"><span v-fit="43" class="fit">実行</span></div>
          <div class="btn b3"><span v-fit="53" class="fit">閉じる</span></div>
          <div class="btn b4"><span v-fit="51" class="fit">ヘルプ</span></div>
        </div>
        <div class="base"></div>
      </section>
    </div>

    <section class="qgis">
      <div class="title"><svg class="logo" viewBox="0 0 14 14"><circle cx="6" cy="6" r="4.500" fill="none" stroke="#6aa329" stroke-width="2.800" /><path d="M7 7l6 6" stroke="#d9832a" stroke-width="3" /></svg><span v-fit="68" class="fit">*無題のプロジェクト - QGIS</span></div>
      <div class="qmenu"><span v-for="m in smallMenu" :key="m[0]" :style="{ marginLeft: m[4] + 'px' }"><span v-fit="m[3]" class="fit">{{ m[0] }}<u v-if="m[1]">{{ m[1] }}</u>{{ m[2] }}</span></span></div>
      <div class="qtb"><svg v-for="(i, k) in smallRow1" :key="k" class="ic19" :style="{ marginLeft: i.gap + 'px' }"><use :href="'#i-' + i.name" /></svg></div>
      <div class="qtb"><svg v-for="(i, k) in smallRow2" :key="k" class="ic19" :style="{ marginLeft: i.gap + 'px' }"><use :href="'#i-' + i.name" /></svg></div>
      <div class="qbody">
        <div class="dock">
          <div class="dt"><span v-fit="16" class="fit">レイヤー</span><span class="fx">▫×</span></div>
          <div class="dtb"><svg v-for="(i, k) in dockRow" :key="k" class="icd" :style="{ marginLeft: i.gap + 'px' }"><use :href="'#i-' + i.name" /></svg></div>
          <div class="tree">
            <div class="tr sel"><i class="dn"></i><svg class="ck" viewBox="0 0 8 8"><path d="M1.500 4l2 3 3-6" fill="none" stroke="#222" /></svg><svg class="ic7"><use href="#i-raster" /></svg><span v-fit="59" class="fit"><u>再投影された</u></span></div>
            <div class="tr v1"><i class="sq"></i><span v-fit="39" class="fit">−2.31447</span></div>
            <div class="tr v2"><span v-fit="35" class="fit">3753.72</span></div>
          </div>
        </div>
        <div class="canvas">
          <svg class="map" viewBox="26 13 1110 1094">
            <path d="M28 17L1058 16V13H1130L1131 550L1134 1104H28z" fill="url(#ground)" stroke="#b5b5b5" stroke-width="2" />
            <clipPath id="mc"><path d="M29 18H1129L1133 1102H29z" /></clipPath>
            <g clip-path="url(#mc)">
              <rect x="28" y="16" width="1106" height="1088" fill="url(#west)" />
              <circle cx="620" cy="568" r="430" fill="url(#fuji)" />
              <circle cx="780" cy="910" r="170" fill="url(#soft)" opacity=".8" />
              <g fill="none" stroke="#fff" stroke-linecap="round" stroke-linejoin="round">
                <path :d="land.main" stroke-width="60" opacity=".13" filter="url(#b2)" />
                <path :d="land.main" stroke-width="20" opacity=".09" filter="url(#b3)" />
                <g filter="url(#b1)">
                  <path :d="land.main" stroke-width="7" opacity=".08" />
                  <path :d="land.spurs" stroke-width="4" opacity=".07" />
                </g>
              </g>
              <g mask="url(#mr)"><rect x="28" y="16" width="1106" height="1088" filter="url(#tex)" opacity=".3" /></g>
              <g fill="none" stroke="#000" filter="url(#b3)" opacity=".55" stroke-width="12">
                <path d="M210 110Q280 160 340 150T470 100L600 105" /><path d="M60 420Q50 620 90 740T230 930L390 990" stroke-width="22" /><path d="M720 920L650 1000M800 930L850 1010" />
              </g>
              <path d="M530 1097h6v3h8v4h6v-3h10v4h-30zM656 1078h5v3h-5zM666 1090h3v3h-3zM694 1089h5v3h-5z" fill="#eee" />
            </g>
            <rect x="198" y="257" width="860" height="589" fill="#f00505" fill-opacity=".42" />
          </svg>
        </div>
      </div>
    </section>

    <div class="popup">
      <div class="pi"><span v-fit="110" class="fit">キャンバス領域を使用</span></div>
      <div class="pi on"><span v-fit="156" class="fit">キャンバス上で領域を指定する</span></div>
      <div class="pi"><span v-fit="106" class="fit">レイヤの領域を使う...</span></div>
    </div>
    <svg class="arrow" viewBox="0 0 30 112"><path d="M21.500 5H27L14.700 95.700L20.300 96.300L9 112L2.700 93.700L7.900 94.600z" fill="#fe0000" /></svg>
    <div v-for="c in 4" :key="c" class="num" :class="'n' + c">{{ c }}</div>
  </div>
</template>

<style>
body { background: #fff; overflow: hidden; }
</style>

<style scoped>
.page { position: relative; width: 1422px; height: 828px; overflow: hidden; display: flex; font-family: "Liberation Sans", "Noto Sans CJK JP", sans-serif; font-feature-settings: "palt"; color: #0a0a0a; background: #fff; white-space: nowrap; }
.page *, .page { box-sizing: border-box; }
.defs { position: absolute; width: 0; height: 0; }
svg { display: block; flex: none; }
i { display: block; flex: none; }
u { text-underline-offset: 2px; text-decoration-thickness: from-font; }
.fit { display: inline-block; flex: none; transform-origin: 0 50%; white-space: pre; }
.left { width: 792px; flex: none; display: flex; flex-direction: column; gap: 11px; }

.shot { position: relative; width: 657px; height: 295px; overflow: hidden; display: flex; flex-direction: column; }
.menubar { height: 25px; flex: none; background: #f0f0f0; display: flex; align-items: center; font-size: 23px; line-height: 25px; }
.mb { height: 25px; flex: none; line-height: 22px; }
.mb.on { color: #fff; background: #0078d7; box-shadow: -2px 0 0 #0078d7, 2px 0 0 #0078d7; }
.tb { flex: none; display: flex; align-items: center; background: linear-gradient(#fafafa, #efefef); }
.tb1 { height: 54px; border-bottom: 1px solid #ccc; }
.tb2 { height: 55px; border-bottom: 2px solid #ccc; padding-top: 3px; }
.ic38 { width: 38px; height: 38px; overflow: visible; }
.gap { height: 20px; flex: none; background: #fff; }
.strip { width: 657px; height: 141px; }
.menu { position: absolute; left: 1px; top: 25px; width: 315px; height: 239px; background: #fff; border: 1px solid #aaa; box-shadow: 1px 1px 1px #888; display: flex; flex-direction: column; font-size: 24px; }
.mi { height: 29.700px; flex: none; display: flex; align-items: center; line-height: 28px; }
.mi .ic16 { width: 16px; height: 16px; margin: 0 7px 0 7px; }
.mi.on { color: #fff; background: #0078d7; }
.tri { margin-left: auto; margin-right: 6px; border: 5px solid transparent; border-left: 6px solid #555; border-right: 0; }
.on .tri { border-left-color: #a8d0f2; }
.menu.sub { left: 314px; top: 203px; width: 360px; height: 90px; }
.sub .mi .ic16 { margin: 0 8px 0 7px; }

.dialog { width: 661px; height: 522px; flex: none; background: #f0f0f0; border-right: 2px solid #2a8ad4; box-shadow: 5px 3px 7px -2px #ccc; padding: 11px 0 0 10px; display: flex; flex-direction: column; font-size: 21px; line-height: 26px; }
.tabs { display: flex; height: 32px; position: relative; align-items: flex-end; flex: none; }
.tab { height: 31px; width: 59px; border: 1px solid #d2d2d2; background: #ececec; padding: 2px 0 0 12px; }
.tab.act { width: 128px; height: 33px; background: #fff; border-bottom: 0; padding: 3px 0 0 13px; margin-bottom: -1px; z-index: 1; }
.panel { width: 638px; height: 364px; flex: none; border: 1px solid #cfcfcf; display: flex; }
.form { width: 620px; padding-left: 2px; display: flex; flex-direction: column; overflow: hidden; }
.line { display: flex; height: 26px; flex: none; }
.lab { flex: none; display: flex; align-items: center; padding-left: 2px; }
.l1 { height: 31px; padding-bottom: 3px; }
.l2 { height: 35px; padding: 1px 0 0 1px; }
.l3 { height: 36px; padding-top: 1px; }
.l4 { height: 34px; font-weight: 700; padding-top: 2px; }
.l5 { height: 29px; padding: 0 0 4px 1px; }
.l6 { height: 39px; padding: 1px 0 0 1px; }
.l7 { height: 25px; padding-bottom: 4px; }
.rt { border: 4px solid transparent; border-left: 5px solid #444; border-right: 0; margin: 0 8px 0 1px; }
.chk { width: 15px; height: 15px; margin-right: 6px; }
.combo { width: 573px; border: 1px solid #c6c6c6; border-radius: 2px; background: linear-gradient(#fff, #ebebeb); display: flex; align-items: center; padding: 0 6px 0 5px; line-height: 24px; }
.ic15 { width: 15px; height: 15px; margin-right: 3px; }
.down { margin-left: auto; border: 5px solid transparent; border-top: 5px solid #555; border-bottom: 0; }
.up { border: 5px solid transparent; border-bottom: 5px solid #555; border-top: 0; }
.btn { flex: none; border: 1px solid #c9c9c9; border-radius: 2px; background: linear-gradient(#fff, #ededed); display: flex; align-items: center; }
.wide { width: 40px; margin-left: 4px; justify-content: center; gap: 4px; }
.dots b { width: 3px; height: 3px; background: #111; border-radius: 1px; }
.sm { width: 31px; margin-left: 4px; justify-content: center; font-size: 18px; line-height: 20px; font-weight: 700; letter-spacing: -.600px; padding-top: 4px; }
.inp { width: 582px; height: 26px; flex: none; border: 1px solid #c9c9c9; border-radius: 2px; background: #fff; display: flex; align-items: center; padding-left: 3px; line-height: 24px; }
.spin { width: 616px; height: 21px; justify-content: space-between; overflow: hidden; }
.spin .sp { width: 16px; height: 20px; border-left: 1px solid #ccc; background: #f0f0f0; }
.log { width: 616px; height: 50px; align-items: flex-start; padding: 1px 0 0 4px; border-bottom: 0; }
.scroll { width: 17px; border-left: 1px solid #d5d5d5; display: flex; flex-direction: column; }
.sb { height: 16px; background: #f8f8f8; display: flex; align-items: center; justify-content: center; border-bottom: 1px solid #ccc; }
.sb .down { margin: 0; }
.thumb { flex: 1; background: linear-gradient(90deg, #fff, #eee); border-bottom: 1px solid #c5c5c5; }
.track { height: 35px; background: #e3e3e3; }
.prow { display: flex; margin-top: 36px; height: 28px; flex: none; align-items: center; }
.prog { width: 539px; height: 27px; border: 1px solid #c3c3c3; border-radius: 2px; background: #fff; display: flex; align-items: center; justify-content: center; line-height: 23px; }
.off { width: 93px; height: 29px; margin-left: 6px; color: #8b8b8b; padding: 1px 0 0 4px; border-color: #d5d5d5; background: #f4f4f4; }
.brow { display: flex; margin-top: 7px; height: 30px; flex: none; }
.brow .btn { padding: 1px 0 0 4px; }
.b1 { width: 199px; margin-right: 252px; }
.b2 { width: 52px; border-color: #9bcbf3; background: linear-gradient(#fff, #e9eff5); margin-right: 6px; }
.b3 { width: 62px; margin-right: 6px; }
.b4 { width: 61px; }
.base { margin: auto 0 0 -10px; height: 2px; flex: none; background: linear-gradient(90deg, #0b3c62 286px, #b9daf3 286px); border-top: 1px solid #2a8ad4; }

.qgis { width: 630px; flex: none; padding-top: 16px; display: flex; flex-direction: column; font-size: 11px; }
.title { height: 11px; flex: none; display: flex; align-items: center; font-size: 7px; line-height: 10px; color: #444; }
.logo { width: 7px; height: 7px; margin-right: 2px; }
.qmenu { height: 14px; flex: none; background: #f2f2f2; display: flex; align-items: center; font-size: 11px; line-height: 13px; padding-bottom: 1px; }
.qmenu > span { flex: none; }
.qtb { height: 22.500px; flex: none; display: flex; align-items: center; background: linear-gradient(#fbfbfb, #f0f0f0); border-bottom: 1px solid #d5d5d5; overflow: hidden; }
.ic19 { width: 19px; height: 17px; }
.qbody { display: flex; height: 377px; flex: none; }
.dock { width: 132px; background: #f0f0f0; padding-right: 4px; display: flex; flex-direction: column; }
.dt { height: 12px; display: flex; align-items: center; justify-content: space-between; font-size: 7px; line-height: 12px; padding: 0 1px; }
.fx { font-size: 7px; color: #777; }
.dtb { height: 19px; display: flex; align-items: center; }
.icd { width: 16px; height: 13px; }
.tree { flex: 1; background: #fff; font-size: 11px; }
.tr { height: 11px; display: flex; align-items: center; line-height: 11px; }
.sel { background: #f0f0f0; padding-left: 1px; font-weight: 500; }
.sel u { text-underline-offset: 1px; }
.dn { border: 2px solid transparent; border-top: 3px solid #555; border-bottom: 0; }
.ck { width: 8px; height: 8px; margin: 0 1px 0 4px; }
.ic7 { width: 8px; height: 8px; margin: 0 1px 0 1px; }
.v1 { padding-left: 19px; margin-top: 1px; }
.v2 { padding-left: 26px; }
.sq { width: 5px; height: 5px; background: #000; margin-right: 1px; }
.canvas { flex: 1; padding: 8px 0 0 115px; }
.map { width: 370px; height: 365px; }

.popup { position: absolute; left: 618px; top: 455px; width: 215px; height: 67px; background: #fff; border: 1px solid #bbb; border-right: 0; border-bottom: 2px solid #999; box-shadow: -1px 1px 2px #bbb; font-size: 13.500px; line-height: 20px; color: #222; }
.pi { height: 21.800px; padding: 1px 0 0 26px; display: flex; align-items: center; }
.pi.on { background: #0078d7; color: #fff; }
.arrow { position: absolute; left: 600px; top: 224px; width: 30px; height: 112px; }
.num { position: absolute; width: 33px; height: 32px; border: 2px solid #fe0000; border-radius: 50%; line-height: 28px; text-align: center; font-family: "Liberation Sans", sans-serif; font-size: 30px; font-weight: 700; color: #fe0000; }
.n1 { left: 592px; top: 347px; }
.n2 { left: 592px; top: 406px; }
.n3 { left: 592px; top: 548px; }
.n4 { left: 487px; top: 752px; }
</style>
